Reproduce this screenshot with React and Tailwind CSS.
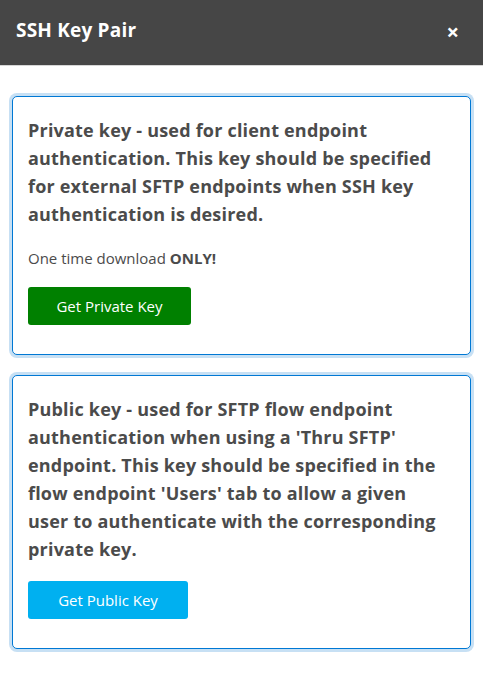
import React from 'react';

const KeyCard = ({ children, note, buttonLabel, buttonClass }) => (
    <div className="rounded-[5px] border border-[#0078d4] ring-[3px] ring-[#c7e0f4] bg-white pl-[15px] pr-[24px] pt-[19px] pb-[29px]">
        <p className="text-[18px] leading-[28px] font-bold tracking-[0.2px] text-[#4b4b4b]">{children}</p>
        {note && (
            <p className="mt-[20px] text-[15px] leading-[21px] text-[#4b4b4b]">
                One time download <span className="font-bold">ONLY!</span>
            </p>
        )}
        <button className={`mt-[18px] h-[38px] rounded-[3px] text-[15px] text-white ${buttonClass}`}>
            {buttonLabel}
        </button>
    </div>
);

export default function App() {
    return (
        <div className="w-[483px] h-[676px] bg-white font-['Open_Sans',sans-serif]">
            {/* header */}
            <div className="h-[66px] bg-[#464646] border-b border-[#d6d6d6] flex items-center justify-between pl-4 pr-6 pb-1">
                <h1 className="text-[19px] font-bold tracking-[0.2px] text-white">SSH Key Pair</h1>
                <button className="text-white text-[22px] leading-none font-bold">×</button>
            </div>

            {/* body */}
            <div className="px-3 pt-[30px] flex flex-col gap-[20px]">
                <KeyCard note buttonLabel="Get Private Key" buttonClass="bg-[#008000] w-[163px]">
                    Private key - used for client endpoint authentication. This key should be specified for external SFTP endpoints when SSH key authentication is desired.
                </KeyCard>
                <KeyCard buttonLabel="Get Public Key" buttonClass="bg-[#00b0f0] w-[160px]">
                    Public key - used for SFTP flow endpoint authentication when using a 'Thru SFTP' endpoint. This key should be specified in the flow endpoint 'Users' tab to allow a given user to authenticate with the corresponding private key.
                </KeyCard>
            </div>
        </div>
    );
}
